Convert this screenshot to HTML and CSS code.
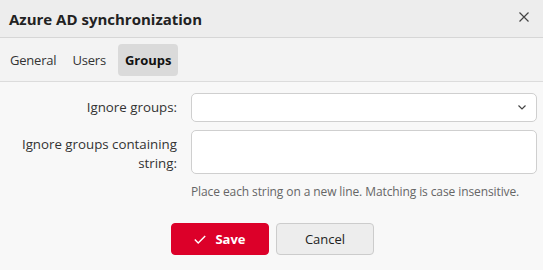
FILE: index.html
```html
<!DOCTYPE html>
<html>
<head>
<meta charset="utf-8">
<link rel="stylesheet" href="styles.css">
</head>
<body>
<div class="dialog">
  <div class="header">
    <div class="title">Azure AD synchronization</div>
    <button class="close" aria-label="Close">
      <svg width="10" height="10" viewBox="0 0 10 10"><path d="M0.5 0.5L9.5 9.5M9.5 0.5L0.5 9.5" stroke="#444" stroke-width="1.2" fill="none"/></svg>
    </button>
  </div>
  <div class="tabs">
    <span class="tab">General</span>
    <span class="tab">Users</span>
    <span class="tab active">Groups</span>
  </div>
  <div class="body">
    <div class="row">
      <label class="label">Ignore groups:</label>
      <div class="select">
        <svg width="8" height="5" viewBox="0 0 8 5"><path d="M0.5 0.5L4 4L7.5 0.5" stroke="#444" stroke-width="1.2" fill="none"/></svg>
      </div>
    </div>
    <div class="row">
      <label class="label">Ignore groups containing string:</label>
      <div class="field">
        <div class="textarea"></div>
        <div class="hint">Place each string on a new line. Matching is case insensitive.</div>
      </div>
    </div>
    <div class="actions">
      <button class="btn save">
        <svg width="12" height="9" viewBox="0 0 12 9"><path d="M0.8 4.6L4.2 8L11.2 1" stroke="#fff" stroke-width="1.4" fill="none"/></svg>
        Save
      </button>
      <button class="btn cancel">Cancel</button>
    </div>
  </div>
</div>
</body>
</html>
```
FILE: styles.css
```css
* { box-sizing: border-box; }
html, body { margin: 0; padding: 0; }
body {
  font-family: "Open Sans", "Noto Sans", sans-serif;
  font-size: 13px;
  color: #222;
  background: #f8f8f8;
  width: 543px;
  height: 270px;
  overflow: hidden;
}
.dialog { display: flex; flex-direction: column; }
.header {
  height: 38px;
  background: #ededed;
  border-bottom: 1px solid #d6d6d6;
  display: flex;
  align-items: center;
  justify-content: space-between;
  padding: 0 13px 0 9px;
}
.title {
  font-weight: 700;
  font-size: 15px;
  color: #222;
}
.close {
  border: 0;
  background: transparent;
  padding: 0;
  width: 12px;
  height: 12px;
  display: flex;
  align-items: center;
  justify-content: center;
  margin-top: -3px;
}
.tabs {
  height: 44px;
  background: #f3f3f3;
  border-bottom: 1px solid #dcdcdc;
  display: flex;
  align-items: center;
  padding: 0 3px;
  gap: 2px;
}
.tab {
  padding: 0 7px;
  height: 32px;
  line-height: 32px;
  border-radius: 4px;
  color: #333;
  letter-spacing: -0.2px;
}
.tab.active {
  margin-left: 3px;
  padding: 0 6px 0 7px;
  background: #dadada;
  font-weight: 700;
  color: #111;
  letter-spacing: 0;
}
.body {
  padding: 11px 6px 0 0;
  display: flex;
  flex-direction: column;
}
.row {
  display: grid;
  grid-template-columns: 177px 1fr;
  column-gap: 14px;
  margin-bottom: 8px;
}
.label {
  text-align: right;
  color: #333;
  font-size: 13.3px;
  line-height: 19px;
  padding-top: 5px;
  padding-left: 10px;
}
.select {
  height: 29px;
  background: #fff;
  border: 1px solid #cfcfcf;
  border-radius: 5px;
  display: flex;
  align-items: center;
  justify-content: flex-end;
  padding-right: 10px;
}
.textarea {
  height: 44px;
  background: #fff;
  border: 1px solid #cfcfcf;
  border-radius: 5px;
}
.hint {
  font-size: 12px;
  color: #666;
  margin-top: 9px;
  letter-spacing: -0.1px;
}
.actions {
  display: flex;
  gap: 7px;
  padding-left: 171px;
  margin-top: 15px;
}
.btn {
  width: 98px;
  height: 32px;
  border-radius: 4px;
  font-family: inherit;
  font-size: 13px;
  display: flex;
  align-items: center;
  justify-content: center;
  gap: 9px;
}
.save {
  background: #dc0029;
  border: 1px solid #dc0029;
  color: #fff;
  font-weight: 700;
}
.cancel {
  background: #ededed;
  border: 1px solid #cccccc;
  color: #222;
}
```
